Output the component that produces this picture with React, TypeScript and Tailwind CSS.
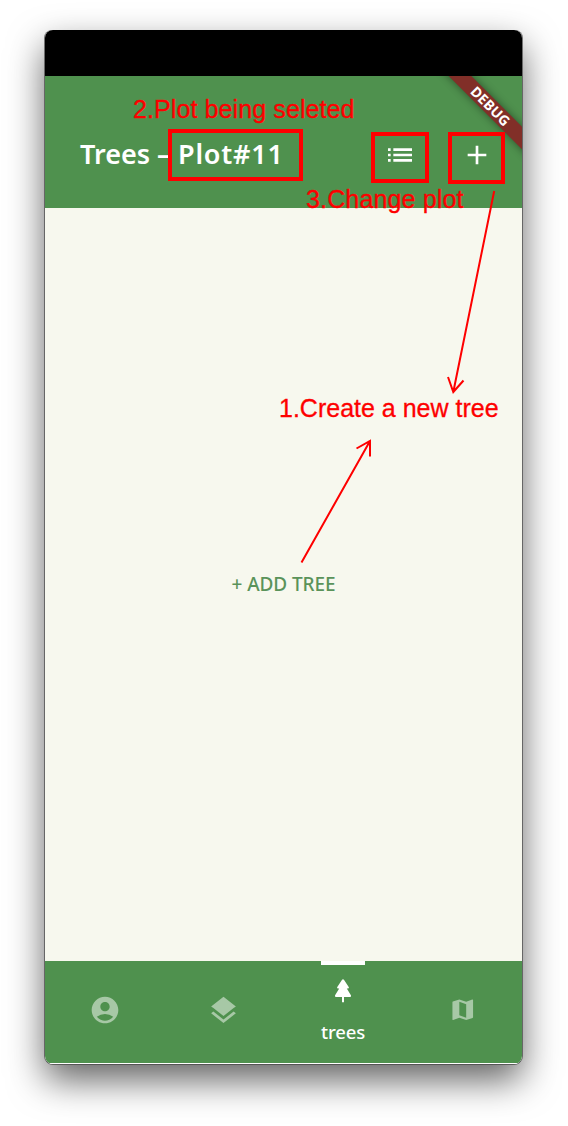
import React from "react";
import { MdAccountCircle, MdAdd, MdLayers, MdList, MdMap } from "react-icons/md";

function PineIcon() {
  return (
    <svg viewBox="0 0 16 24" className="h-6 w-4" fill="currentColor">
      <path d="M8 0.3 Q8.6 0.3 9.1 1 L13.7 8 Q14.4 9.3 12.9 9.4 L11.8 9.5 L15.9 16.3 Q16.6 17.8 15 17.9 L9 17.9 V23.2 H7 V17.9 L1 17.9 Q-0.6 17.8 0.1 16.3 L4.2 9.5 L3.1 9.4 Q1.6 9.3 2.3 8 L6.9 1 Q7.4 0.3 8 0.3 Z" />
    </svg>
  );
}

function DebugBanner() {
  return (
    <div className="absolute left-[385px] top-[23px] flex h-[16px] w-[122px] rotate-45 items-center justify-center bg-[#812f28] pr-[2px] pb-px text-[14px] leading-none font-bold tracking-[0.2px] text-white shadow-[0_0_8px_rgba(0,0,0,0.45)]">
      DEBUG
    </div>
  );
}

function Header() {
  return (
    <header className="relative flex h-[132px] shrink-0 items-center overflow-hidden bg-[#4f914e] pt-[27px] text-white">
      <h1 className="flex h-[105px] w-[324px] items-start whitespace-pre pl-[35px] pt-[31px] text-[27px] leading-[40px] font-semibold">
        <span className="w-[77px]">Trees</span>
        <span className="w-[21px]">–</span>
        <span className="tracking-[0.8px]">Plot#11</span>
      </h1>
      <div className="flex h-[105px] items-start pl-[15px] pt-[36px]">
        <MdList className="size-8" />
        <MdAdd className="ml-[45px] size-8" />
      </div>
      <DebugBanner />
    </header>
  );
}

function BottomNav() {
  return (
    <nav className="grid h-[102px] shrink-0 grid-cols-4 bg-[#4f914e] text-[#a7c8a6]">
      <div className="flex items-center justify-center pb-[4px]">
        <MdAccountCircle className="size-[32px]" />
      </div>
      <div className="flex items-center justify-center pb-[4px]">
        <MdLayers className="size-[33px]" />
      </div>
      <div className="flex flex-col items-center text-white">
        <div className="h-[4px] w-[44px] bg-white" />
        <div className="mt-[14px]">
          <PineIcon />
        </div>
        <span className="mt-[16px] text-[18.5px] leading-[26px] font-medium tracking-[-0.1px]">trees</span>
      </div>
      <div className="flex items-center justify-center pb-[4px]">
        <MdMap className="size-[27.5px]" />
      </div>
    </nav>
  );
}

function Annotations() {
  return (
    <div className="pointer-events-none absolute inset-0 font-['Liberation_Sans',sans-serif] text-[25px] leading-[28px] whitespace-nowrap text-[#fe0000] [-webkit-text-stroke:0.3px_#fe0000]">
      <span className="absolute left-[133px] top-[95px] tracking-[0.1px]">2.Plot being seleted</span>
      <span className="absolute left-[306px] top-[185px] tracking-[0.15px]">3.Change plot</span>
      <span className="absolute left-[279px] top-[394px]">1.Create a new tree</span>
      <div className="absolute left-[168px] top-[129px] h-[52px] w-[135px] border-4 border-[#fe0000]" />
      <div className="absolute left-[371px] top-[132px] h-[51px] w-[58px] border-4 border-[#fe0000]" />
      <div className="absolute left-[448px] top-[132px] h-[52px] w-[57px] border-4 border-[#fe0000]" />
      <svg
        className="absolute inset-0"
        width="568"
        height="1126"
        fill="none"
        stroke="#fe0000"
        strokeWidth="2"
      >
        <path d="M494.2 191 L453.3 392 M448 377 L453.3 392 L463.5 380.5" />
        <path d="M301.5 562.5 L370 441 M356.5 448.5 L370 441 V456.5" />
      </svg>
    </div>
  );
}

export default function App() {
  return (
    <div className="relative h-[1126px] w-[568px] overflow-hidden bg-white pl-[45px] pt-[30px] font-['Noto_Sans',sans-serif]">
      <div className="h-[1034px] w-[477px] rounded-[8px] shadow-[-1px_0_0_rgba(70,70,70,0.7),1px_0_0_rgba(70,70,70,0.7),0_1px_0_rgba(70,70,70,0.75),0_16px_36px_rgba(0,0,0,0.62)]">
        <div className="flex h-full flex-col overflow-hidden rounded-[8px] bg-white">
          <div className="h-[46px] shrink-0 bg-black" />
          <Header />
          <main className="flex flex-1 items-center justify-center bg-[#f7f8ee] pb-[2px]">
            <button className="text-[19px] leading-[26px] font-medium tracking-[-0.1px] text-[#5a935a]">
              + ADD TREE
            </button>
          </main>
          <BottomNav />
          <div className="h-px shrink-0 bg-white" />
        </div>
      </div>
      <Annotations />
    </div>
  );
}
